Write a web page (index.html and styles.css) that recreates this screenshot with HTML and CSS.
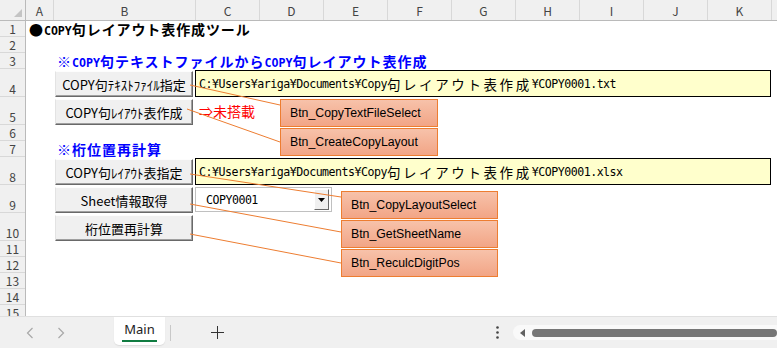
FILE: index.html
```html
<!DOCTYPE html>
<html lang="ja">
<head>
    <meta charset="UTF-8">
    <title>COPY句レイアウト表作成ツール</title>
    <link rel="stylesheet" href="styles.css">
</head>
<body>
    <div class="sheet">
        <div class="col-heads">
            <div class="corner"><span class="select-all"></span></div>
            <div class="ch col-a">A</div>
            <div class="ch col-b">B</div>
            <div class="ch">C</div>
            <div class="ch">D</div>
            <div class="ch">E</div>
            <div class="ch">F</div>
            <div class="ch">G</div>
            <div class="ch">H</div>
            <div class="ch">I</div>
            <div class="ch">J</div>
            <div class="ch">K</div>
            <div class="ch col-rest"></div>
        </div>
        <div class="body">
            <div class="row-heads">
                <div class="rh">1</div>
                <div class="rh">2</div>
                <div class="rh">3</div>
                <div class="rh">4</div>
                <div class="rh">5</div>
                <div class="rh">6</div>
                <div class="rh">7</div>
                <div class="rh">8</div>
                <div class="rh">9</div>
                <div class="rh">10</div>
                <div class="rh">11</div>
                <div class="rh">12</div>
                <div class="rh">13</div>
                <div class="rh">14</div>
                <div class="rh">15</div>
            </div>
            <div class="cells">
                <div class="title">●<span class="lat">COPY</span>句レイアウト表作成ツール</div>
                <div class="heading r3">※<span class="lat">COPY</span>句テキストファイルから<span class="lat">COPY</span>句レイアウト表作成</div>

                <button class="btn r4">COPY句ﾃｷｽﾄﾌｧｲﾙ指定</button>
                <div class="path r4">C:¥Users¥ariga¥Documents¥Copy<span class="jp">句レイアウト表作成</span>¥COPY0001.txt</div>
                <button class="btn r5">COPY句ﾚｲｱｳﾄ表作成</button>
                <div class="note r5">⇒未搭載</div>

                <div class="heading r7">※桁位置再計算</div>

                <button class="btn r8">COPY句ﾚｲｱｳﾄ表指定</button>
                <div class="path r8">C:¥Users¥ariga¥Documents¥Copy<span class="jp">句レイアウト表作成</span>¥COPY0001.xlsx</div>
                <button class="btn r9">Sheet情報取得</button>
                <div class="combo r9">
                    <span class="combo-text">COPY0001</span>
                    <span class="drop"><svg width="7" height="4" viewBox="0 0 7 4"><path d="M0 0H7L3.5 4Z" fill="#000"/></svg></span>
                </div>
                <button class="btn r10">桁位置再計算</button>

                <!-- callout leader lines -->
                <svg class="leaders" width="751" height="295">
                    <line x1="164" y1="64" x2="254" y2="84"/>
                    <line x1="161" y1="88" x2="254" y2="121"/>
                    <line x1="164" y1="153" x2="315" y2="176"/>
                    <line x1="164" y1="183" x2="315" y2="211"/>
                    <line x1="164" y1="213" x2="315" y2="242"/>
                </svg>
                <div class="callout co-text-file">Btn_CopyTextFileSelect</div>
                <div class="callout co-create">Btn_CreateCopyLayout</div>
                <div class="callout co-layout">Btn_CopyLayoutSelect</div>
                <div class="callout co-sheet">Btn_GetSheetName</div>
                <div class="callout co-reculc">Btn_ReculcDigitPos</div>
            </div>
        </div>
    </div>

    <div class="tabbar">
        <svg class="chev first" width="8" height="12" viewBox="0 0 8 12"><path d="M6.5 1L1.5 6L6.5 11"/></svg>
        <svg class="chev" width="8" height="12" viewBox="0 0 8 12"><path d="M1.5 1L6.5 6L1.5 11"/></svg>
        <div class="tab">Main</div>
        <span class="tab-sep"></span>
        <svg class="add" width="13" height="13" viewBox="0 0 13 13"><path d="M6.5 0V13M0 6.5H13"/></svg>
        <svg class="more" width="3" height="13" viewBox="0 0 3 13"><circle cx="1.5" cy="1.5" r="1.3"/><circle cx="1.5" cy="6.5" r="1.3"/><circle cx="1.5" cy="11.5" r="1.3"/></svg>
        <div class="hscroll">
            <svg class="hs-arrow" width="5" height="8" viewBox="0 0 5 8"><path d="M5 0V8L0 4Z"/></svg>
            <span class="thumb"></span>
        </div>
    </div>
</body>
</html>
```

FILE: styles.css
```css
body {
    margin: 0;
    background: #fff;
    font-family: "Noto Sans CJK JP", sans-serif;
}
.sheet {
    width: 777px;
    height: 316px;
    overflow: hidden;
}

/* headers */
.col-heads {
    display: flex;
    height: 21px;
    box-sizing: border-box;
    background: #f0f0f0;
    border-bottom: 1px solid #bababa;
}
.corner {
    width: 26px;
    box-sizing: border-box;
    border-right: 1px solid #bababa;
    display: flex;
    align-items: flex-end;
    justify-content: flex-end;
    padding: 0 3px 3px 0;
}
.select-all {
    width: 0;
    height: 0;
    border-left: 8px solid transparent;
    border-bottom: 8px solid #c4c4c4;
}
.ch {
    width: 64px;
    flex: none;
    box-sizing: border-box;
    border-right: 1px solid #d8d8d8;
    text-align: center;
    font-size: 12px;
    line-height: 21px;
    color: #444;
}
.col-a { width: 28px; }
.col-b { width: 142px; }
.col-rest { width: 5px; border-right: none; }

.body {
    display: flex;
}
.row-heads,
.cells {
    display: grid;
    grid-template-rows: 16px 16px 16px 28px 28px 16px 16px 28px 28px 28px 16px 16px 16px 16px 16px;
}
.row-heads {
    width: 26px;
    flex: none;
    box-sizing: border-box;
    background: #f0f0f0;
    border-right: 1px solid #bababa;
}
.rh {
    box-sizing: border-box;
    border-bottom: 1px solid #d8d8d8;
    display: flex;
    align-items: flex-end;
    justify-content: center;
    overflow: hidden;
    font-size: 12px;
    line-height: 14px;
    color: #444;
}

/* sheet contents */
.cells {
    position: relative;
    grid-template-columns: 28px 142px repeat(9, 64px) 5px;
}
.r3 { grid-row: 3; }
.r4 { grid-row: 4; }
.r5 { grid-row: 5; }
.r7 { grid-row: 7; }
.r8 { grid-row: 8; }
.r9 { grid-row: 9; }
.r10 { grid-row: 10; }

.title,
.heading {
    font-weight: bold;
    font-size: 14px;
    line-height: 16px;
    letter-spacing: 0.9px;
    white-space: nowrap;
}
.lat {
    font-family: "DejaVu Sans Mono", monospace;
    font-weight: bold;
    font-size: 11.6px;
    letter-spacing: 0;
}
.title {
    grid-row: 1;
    grid-column: 1 / -1;
    padding-left: 3px;
}
.heading {
    grid-column: 2 / -1;
    padding-left: 3px;
    letter-spacing: 1px;
    color: #0000ff;
}
.btn {
    grid-column: 2;
    margin: 2px 3px 0 1px;
    padding: 0;
    background: #f0f0f0;
    border: 1px solid;
    border-color: #fdfdfd #696969 #696969 #e3e3e3;
    box-shadow: inset -1px -1px #a0a0a0;
    font-family: "Noto Sans CJK JP", sans-serif;
    font-size: 13px;
    color: #000;
    white-space: nowrap;
}
.path {
    grid-column: 3 / 12;
    margin: 1px 1px 0 -1px;
    padding-left: 3px;
    display: flex;
    align-items: center;
    background: #ffffcc;
    border: 1px solid #000;
    font-family: "DejaVu Sans Mono", monospace;
    font-size: 11.6px;
    letter-spacing: -0.5px;
    white-space: nowrap;
}
.jp {
    font-family: "Noto Sans CJK JP", sans-serif;
    font-size: 13.5px;
    letter-spacing: 2.6px;
}
.note {
    grid-column: 3 / 6;
    padding-left: 3px;
    display: flex;
    align-items: center;
    font-size: 14px;
    color: #ff0000;
}
.combo {
    grid-column: 3 / 6;
    justify-self: start;
    width: 137px;
    margin: 2px 0 1px -1px;
    box-sizing: border-box;
    display: flex;
    align-items: center;
    justify-content: space-between;
    border: 1px solid #c0c0c0;
    background: #fff;
    padding-left: 10px;
}
.combo-text {
    font-family: "DejaVu Sans Mono", monospace;
    font-size: 11.6px;
    letter-spacing: -0.5px;
}
.drop {
    align-self: stretch;
    width: 15px;
    margin: 1px 2px 1px 0;
    box-sizing: border-box;
    display: flex;
    align-items: center;
    justify-content: center;
    background: #f0f0f0;
    border: 1px solid;
    border-color: #fff #696969 #696969 #fff;
}

/* callouts lie over the sheet */
.leaders {
    position: absolute;
    left: 0;
    top: 0;
    stroke: #ed7d31;
    stroke-width: 1;
}
.callout {
    position: absolute;
    width: 158px;
    height: 28px;
    box-sizing: border-box;
    padding-left: 9px;
    display: flex;
    align-items: center;
    background: linear-gradient(#f7c2aa, #f2a586);
    border: 1px solid #ed7d31;
    font-family: "Liberation Sans", sans-serif;
    font-size: 12.3px;
    color: #000;
}
.co-text-file { left: 254px; top: 78px; }
.co-create { left: 254px; top: 107px; }
.co-layout { left: 315px; top: 170px; width: 157px; }
.co-sheet { left: 315px; top: 199px; width: 157px; }
.co-reculc { left: 315px; top: 228px; width: 157px; }

/* sheet tab bar */
.tabbar {
    height: 32px;
    box-sizing: border-box;
    display: flex;
    align-items: center;
    background: #f0f0f0;
    border-top: 1px solid #e0e0e0;
    font-family: "Noto Sans", sans-serif;
}
.chev {
    fill: none;
    stroke: #a8a8a8;
    stroke-width: 1.2;
    margin-left: 23px;
}
.chev.first {
    margin-left: 26px;
}
.tab {
    align-self: flex-start;
    width: 51px;
    height: 28px;
    margin-left: 49px;
    box-sizing: border-box;
    display: flex;
    flex-direction: column;
    align-items: center;
    justify-content: center;
    background: #fff;
    border-radius: 0 0 5px 5px;
    box-shadow: 0 1px 1px #dcdcdc;
    font-size: 13px;
    color: #222;
}
.tab::after {
    content: "";
    width: 35px;
    height: 2px;
    margin-top: 2px;
    background: #107c41;
}
.tab-sep {
    width: 1px;
    height: 16px;
    margin-left: 5px;
    background: #c8c8c8;
}
.add {
    margin-left: 40px;
    stroke: #333;
    stroke-width: 1;
}
.more {
    margin-left: 272px;
    fill: #444;
}
.hscroll {
    flex: 1;
    height: 15px;
    margin-left: 14px;
    display: flex;
    align-items: center;
    background: #f9f9f9;
    border-radius: 8px 0 0 8px;
}
.hs-arrow {
    margin-left: 7px;
    fill: #606060;
}
.thumb {
    flex: 1;
    height: 8px;
    margin-left: 7px;
    border-radius: 4px;
    background: #767676;
}
```
